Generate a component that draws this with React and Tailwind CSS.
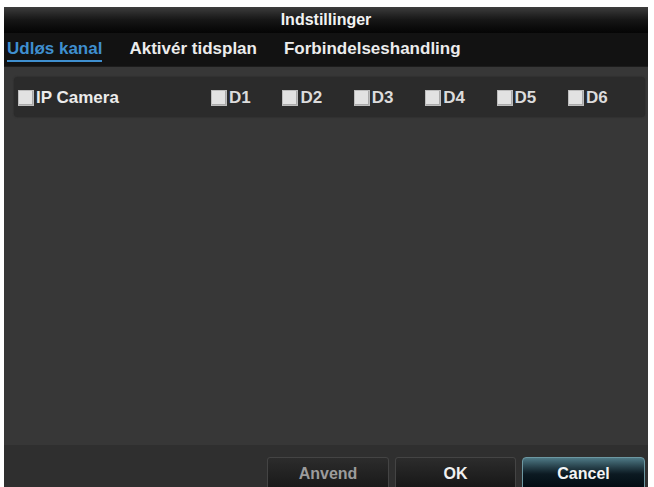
import React, { useState } from 'react';

const font = { fontFamily: '"Liberation Sans", Arial, sans-serif' };

const channels = ['D1', 'D2', 'D3', 'D4', 'D5', 'D6'];
const tabs = ['Udløs kanal', 'Aktivér tidsplan', 'Forbindelseshandling'];

function Box() {
  return (
    <span className="inline-block w-[16px] h-[16px] bg-[#e2e2e2] border border-[#bdbdbd] shadow-[inset_-1px_-1px_0_#a9a9a9] mr-[2px]" />
  );
}

export default function App() {
  const [tab, setTab] = useState(0);

  return (
    <div className="w-[654px] h-[487px] bg-white pt-[7px] pl-[4px] pr-[6px] overflow-hidden" style={font}>
      <div className="h-[487px] flex flex-col">
        {/* title */}
        <div className="h-[26px] bg-gradient-to-b from-[#3d3d3d] via-[#161616] to-[#050505] flex items-center justify-center">
          <span className="text-[16px] font-bold text-[#f2f2f2]">Indstillinger</span>
        </div>

        {/* tabs */}
        <div className="h-[34px] bg-[#121212] flex items-end pb-[4px] pl-[3px] border-b border-[#1c1c1c]">
          {tabs.map((t, i) => (
            <button
              key={t}
              onClick={() => setTab(i)}
              className={
                'text-[17px] font-bold pb-[2px] mr-[27px] border-b-2 leading-[19px] ' +
                (i === tab ? 'text-[#3f8fcf] border-[#3f8fcf]' : 'text-[#ececec] border-transparent')
              }
            >
              {t}
            </button>
          ))}
        </div>

        {/* content */}
        <div className="flex-1 bg-[#373737] flex flex-col pt-[10px] pl-[10px] pr-[3px]">
          <div className="h-[40px] bg-[#2b2b2b] rounded-[4px] flex items-center pt-[2px] pl-[4px] shadow-[0_0_2px_#252525]">
            <label className="w-[193px] flex items-center text-[17px] font-bold text-[#ececec]">
              <Box />
              IP Camera
            </label>
            {channels.map((c) => (
              <label key={c} className="w-[71.4px] flex items-center text-[17px] text-[#dcdcdc] font-bold">
                <Box />
                {c}
              </label>
            ))}
          </div>

          <div className="flex-1" />

          <div className="h-[49px] -ml-[10px] -mr-[3px] bg-[#2f2f2f] flex justify-end items-start pt-[12px] pr-[3px] gap-[6px]">
            <button className="w-[122px] h-[34px] bg-gradient-to-b from-[#2c2c2c] to-[#181818] border border-[#444] rounded-[3px] text-[16px] font-bold text-[#9c9c9c]">
              Anvend
            </button>
            <button className="w-[121px] h-[34px] bg-gradient-to-b from-[#2c2c2c] to-[#161616] border border-[#444] rounded-[3px] text-[16px] font-bold text-[#f0f0f0]">
              OK
            </button>
            <button className="w-[123px] h-[34px] bg-gradient-to-b from-[#4f7a86] via-[#0c1a22] to-[#020a10] border border-[#6d98a2] rounded-[4px] text-[16px] font-bold text-[#f4f4f4]">
              Cancel
            </button>
          </div>
        </div>
      </div>
    </div>
  );
}
